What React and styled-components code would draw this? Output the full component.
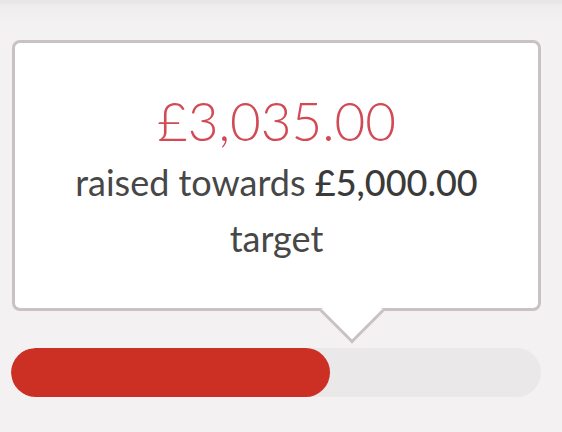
import React from "react";
import styled, { createGlobalStyle } from "styled-components";

const Global = createGlobalStyle`
  html, body { margin: 0; padding: 0; background: #f4f1f2; }
  body { font-family: Lato, "Noto Sans", sans-serif; }
`;

const Page = styled.div`
  height: 432px;
  box-sizing: border-box;
  padding: 40px 21px 0 11px;
  background: linear-gradient(#e9e6e7 0, #e9e6e7 3px, #efeced 5px, #f4f1f2 22px);
  overflow: hidden;
`;

const Card = styled.div`
  position: relative;
  margin-left: 1px;
  height: 271px;
  box-sizing: border-box;
  background: #fff;
  border: 3px solid #c8c1c5;
  border-radius: 8px;
  display: flex;
  flex-direction: column;
  align-items: center;
  padding-top: 46px;
  text-align: center;
`;

const Pointer = styled.div`
  position: absolute;
  bottom: -26px;
  width: 46px;
  height: 46px;
  margin-left: -23px;
  background: #fff;
  border-right: 3px solid #c8c1c5;
  border-bottom: 3px solid #c8c1c5;
  box-sizing: border-box;
  transform: rotate(45deg);
`;

const Amount = styled.div`
  font-size: 53px;
  font-weight: 300;
  line-height: 63px;
  color: #d14a55;
`;

const Caption = styled.div`
  margin-top: 2px;
  font-size: 36px;
  line-height: 56px;
  color: #474747;
`;

const Target = styled.strong`
  font-weight: 500;
  color: #3a3a3a;
`;

const Track = styled.div`
  margin-top: 37px;
  height: 49px;
  border-radius: 25px;
  background: #ebe8e9;
  overflow: hidden;
`;

const Fill = styled.div`
  height: 100%;
  border-radius: 25px;
  background: #cc2f24;
`;

export default function App() {
  const pct = 60.2;
  return (
    <>
      <Global />
      <Page>
        <Card>
          <Amount>£3,035.00</Amount>
          <Caption>
            raised towards <Target>£5,000.00</Target>
            <br />
            target
          </Caption>
          <Pointer style={{ left: "64.4%" }} />
        </Card>
        <Track>
          <Fill style={{ width: `${pct}%` }} />
        </Track>
      </Page>
    </>
  );
}
